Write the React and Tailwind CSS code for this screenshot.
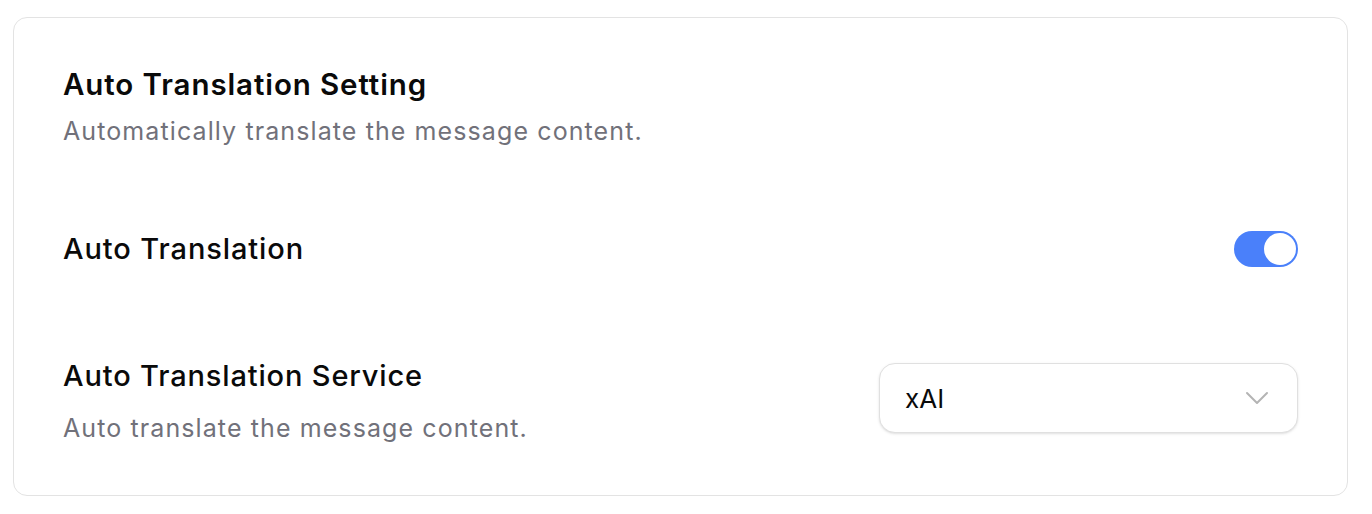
import { ChevronDown } from 'lucide-react'

export default function App() {
  return (
    <div className="w-[1372px] h-[514px] bg-white pt-[17px] pl-[13px]" style={{ fontFamily: 'Inter, "Noto Sans", sans-serif' }}>
      <div className="w-[1335px] h-[479px] border border-[#e3e3e3] rounded-[14px] bg-white pt-[48px] px-[49px]">
        {/* section header */}
        <h2 className="text-[29.5px] leading-[36px] font-semibold text-[#0a0a0a] tracking-[0.9px]">Auto Translation Setting</h2>
        <p className="mt-[13px] text-[25px] leading-[32px] text-[#71717a] tracking-[1.1px]">Automatically translate the message content.</p>

        {/* toggle row */}
        <div className="mt-[84px] flex items-center justify-between h-[36px]">
          <span className="text-[29px] leading-[36px] font-medium text-[#0a0a0a] tracking-[0.9px]">Auto Translation</span>
          <button className="w-[64px] h-[36px] rounded-full bg-[#4a80fa] p-[2px] flex justify-end">
            <span className="w-[32px] h-[32px] rounded-full bg-white" />
          </button>
        </div>

        {/* service row */}
        <div className="mt-[91px] flex items-start justify-between">
          <div>
            <div className="text-[29px] leading-[36px] font-medium text-[#0a0a0a] tracking-[0.85px]">Auto Translation Service</div>
            <div className="mt-[18px] text-[25px] leading-[32px] text-[#71717a] tracking-[1.1px]">Auto translate the message content.</div>
          </div>
          <button className="mt-[5px] w-[419px] h-[70px] rounded-[16px] border border-[#e0e0e0] bg-white shadow-sm flex items-center justify-between pl-[25px] pr-[20px]">
            <span className="text-[26px] text-[#0a0a0a]">xAI</span>
            <ChevronDown size={40} strokeWidth={1.2} className="text-[#b4b4b4]" />
          </button>
        </div>
      </div>
    </div>
  )
}
